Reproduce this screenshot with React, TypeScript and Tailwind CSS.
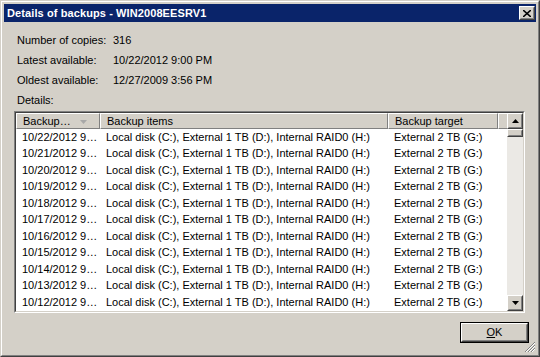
import React from "react";

const ROWS = [
  "10/22/2012 9…",
  "10/21/2012 9…",
  "10/20/2012 9…",
  "10/19/2012 9…",
  "10/18/2012 9…",
  "10/17/2012 9…",
  "10/16/2012 9…",
  "10/15/2012 9…",
  "10/14/2012 9…",
  "10/13/2012 9…",
  "10/12/2012 9…",
  "10/11/2012 9…",
];

const ITEMS = "Local disk (C:), External 1 TB (D:), Internal RAID0 (H:)";
const TARGET = "External 2 TB (G:)";

function Raised({ className, children }: { className?: string; children?: React.ReactNode }) {
  return (
    <div className={`border border-t-white border-l-white border-r-[#404040] border-b-[#404040] ${className ?? ""}`}>
      <div className="w-full h-full border border-t-[#d4d0c8] border-l-[#d4d0c8] border-r-[#808080] border-b-[#808080] flex items-center justify-center">
        {children}
      </div>
    </div>
  );
}

function HeaderCell({ label, width, arrow }: { label: string; width: string; arrow?: boolean }) {
  return (
    <div className={`${width} h-full shrink-0 flex items-center pl-[6px] border-r border-r-[#808080] border-b border-b-[#808080] border-t border-t-white border-l border-l-white relative`}>
      <span>{label}</span>
      {arrow && (
        <svg className="absolute left-[63px] top-[6px]" width="8" height="5" viewBox="0 0 8 5">
          <path d="M0 0 H7 L3.5 4 Z" fill="#a8a8a8" />
        </svg>
      )}
    </div>
  );
}

function Arrow({ up }: { up?: boolean }) {
  return (
    <svg width="7" height="4" viewBox="0 0 7 4">
      <path d={up ? "M3.5 0 L7 4 H0 Z" : "M0 0 H7 L3.5 4 Z"} fill="#000" />
    </svg>
  );
}

export default function App() {
  return (
    <div
      className="w-[540px] h-[357px] bg-[#d4d0c8] text-[11px] text-black leading-none border border-t-[#d4d0c8] border-l-[#d4d0c8] border-r-[#404040] border-b-[#404040] overflow-hidden"
      style={{ fontFamily: '"Liberation Sans", Arial, sans-serif' }}
    >
      <div className="w-full h-full border border-t-white border-l-white border-r-[#808080] border-b-[#808080] p-[2px] flex flex-col">
        {/* title bar */}
        <div className="h-[18px] bg-[#0a246a] flex items-center justify-between pl-[3px] pr-[1px] shrink-0">
          <span className="text-white font-bold text-[11px] tracking-[0.1px]">Details of backups - WIN2008EESRV1</span>
          <Raised className="w-[16px] h-[14px] bg-[#d4d0c8]">
            <svg width="8" height="7" viewBox="0 0 8 7">
              <path d="M0 0 L8 7 M8 0 L0 7" stroke="#000" strokeWidth="1.6" />
            </svg>
          </Raised>
        </div>

        {/* info */}
        <div className="pl-[13px] pt-[13px] flex flex-col gap-[9px]">
          <div className="flex"><span className="w-[96px]">Number of copies:</span><span>316</span></div>
          <div className="flex"><span className="w-[96px]">Latest available:</span><span>10/22/2012 9:00 PM</span></div>
          <div className="flex"><span className="w-[96px]">Oldest available:</span><span>12/27/2009 3:56 PM</span></div>
          <div>Details:</div>
        </div>

        {/* list view */}
        <div className="ml-[10px] mt-[5px] w-[511px] h-[202px] border border-t-[#808080] border-l-[#808080] border-r-white border-b-white shrink-0">
          <div className="w-full h-full border border-t-[#404040] border-l-[#404040] border-r-[#d4d0c8] border-b-[#d4d0c8] bg-white flex">
            <div className="flex-1 flex flex-col overflow-hidden">
              <div className="h-[16px] flex bg-[#d4d0c8] shrink-0">
                <HeaderCell label="Backup…" width="w-[84px]" arrow />
                <HeaderCell label="Backup items" width="w-[288px]" />
                <HeaderCell label="Backup target" width="w-[110px]" />
                <div className="flex-1 border-t border-t-white border-l border-l-white border-b border-b-[#808080]" />
              </div>
              <div className="flex-1 overflow-hidden">
                {ROWS.map((d) => (
                  <div key={d} className="h-[16.5px] flex items-center whitespace-nowrap">
                    <span className="w-[84px] pl-[6px] shrink-0">{d}</span>
                    <span className="w-[288px] pl-[6px] shrink-0">{ITEMS}</span>
                    <span className="pl-[6px]">{TARGET}</span>
                  </div>
                ))}
              </div>
            </div>
            {/* scrollbar */}
            <div className="w-[16px] h-full flex flex-col bg-[#ebe9e5] shrink-0">
              <Raised className="w-[16px] h-[16px] bg-[#d4d0c8] shrink-0"><Arrow up /></Raised>
              <Raised className="w-[16px] h-[8px] bg-[#d4d0c8] shrink-0" />
              <div className="flex-1" />
              <Raised className="w-[16px] h-[16px] bg-[#d4d0c8] shrink-0"><Arrow /></Raised>
            </div>
          </div>
        </div>

        {/* footer */}
        <div className="flex-1 flex justify-end items-start pr-[7px] pt-[9px] relative">
          <div className="border border-black">
            <Raised className="w-[67px] h-[19px] bg-[#d4d0c8]">
              <span><span className="underline">O</span>K</span>
            </Raised>
          </div>
          <svg className="absolute right-0 bottom-0" width="12" height="12" viewBox="0 0 12 12">
            <path d="M11 1 L1 11 M11 4 L4 11 M11 7 L7 11" stroke="#808080" strokeWidth="1" />
            <path d="M11 2 L2 11 M11 5 L5 11 M11 8 L8 11" stroke="#ffffff" strokeWidth="1" />
          </svg>
        </div>
      </div>
    </div>
  );
}
